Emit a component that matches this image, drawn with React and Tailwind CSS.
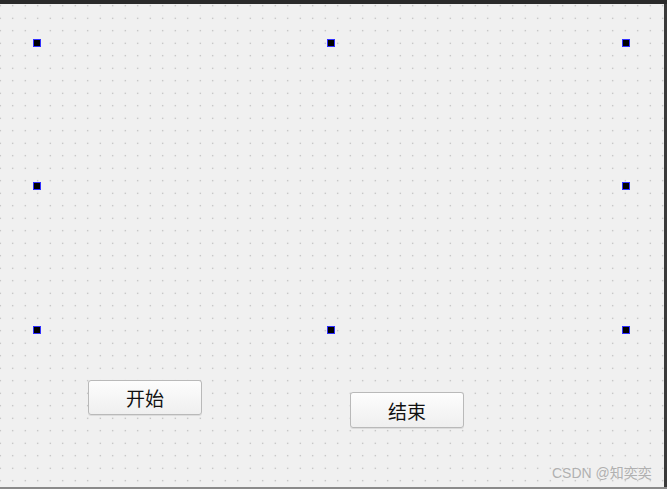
export default function App() {
  // Selection handles around the form being edited
  const handles = [
    [37, 43], [331, 43], [626, 43],
    [37, 186], [626, 186],
    [37, 330], [331, 330], [626, 330],
  ];

  const btn =
    "absolute w-[114px] h-[35px] rounded-[3px] border border-[#b9b9b9] bg-gradient-to-b from-[#fdfdfd] to-[#efefef] text-[19px] leading-none text-[#111] flex items-center justify-center font-['Noto_Sans_CJK_SC',sans-serif] shadow-[0_1px_0_#dcdcdc]";

  return (
    <div className="w-[667px] h-[489px] flex flex-col bg-[#f0f0f0] overflow-hidden">
      <div className="h-[4px] bg-[#2a2a2a]" />
      <div className="flex-1 flex">
        <div className="relative flex-1 bg-[#f0f0f0] bg-[radial-gradient(circle,#ababab_0.6px,transparent_1px)] bg-size-[12.5px_12.5px] bg-position-[-6px_-4.5px]">
          {handles.map(([x, y], i) => (
            <div
              key={i}
              className="absolute w-[8px] h-[8px] bg-black border border-[#2f2fff]"
              style={{ left: x - 4, top: y - 4 - 4 }}
            />
          ))}
          <div className={btn + " left-[88px] top-[376px]"}>开始</div>
          <div className={btn + " left-[350px] top-[388px] h-[36px]"}>结束</div>
          <div className="absolute left-[552px] top-[459px] text-[14px] text-[#b0b0b0] font-['Liberation_Sans','Noto_Sans_CJK_SC',sans-serif]">
            CSDN @知奕奕
          </div>
        </div>
        <div className="w-[3px] bg-[#3a3a3a]" />
      </div>
      <div className="h-[2px] bg-[#8a8a8a]" />
    </div>
  );
}
